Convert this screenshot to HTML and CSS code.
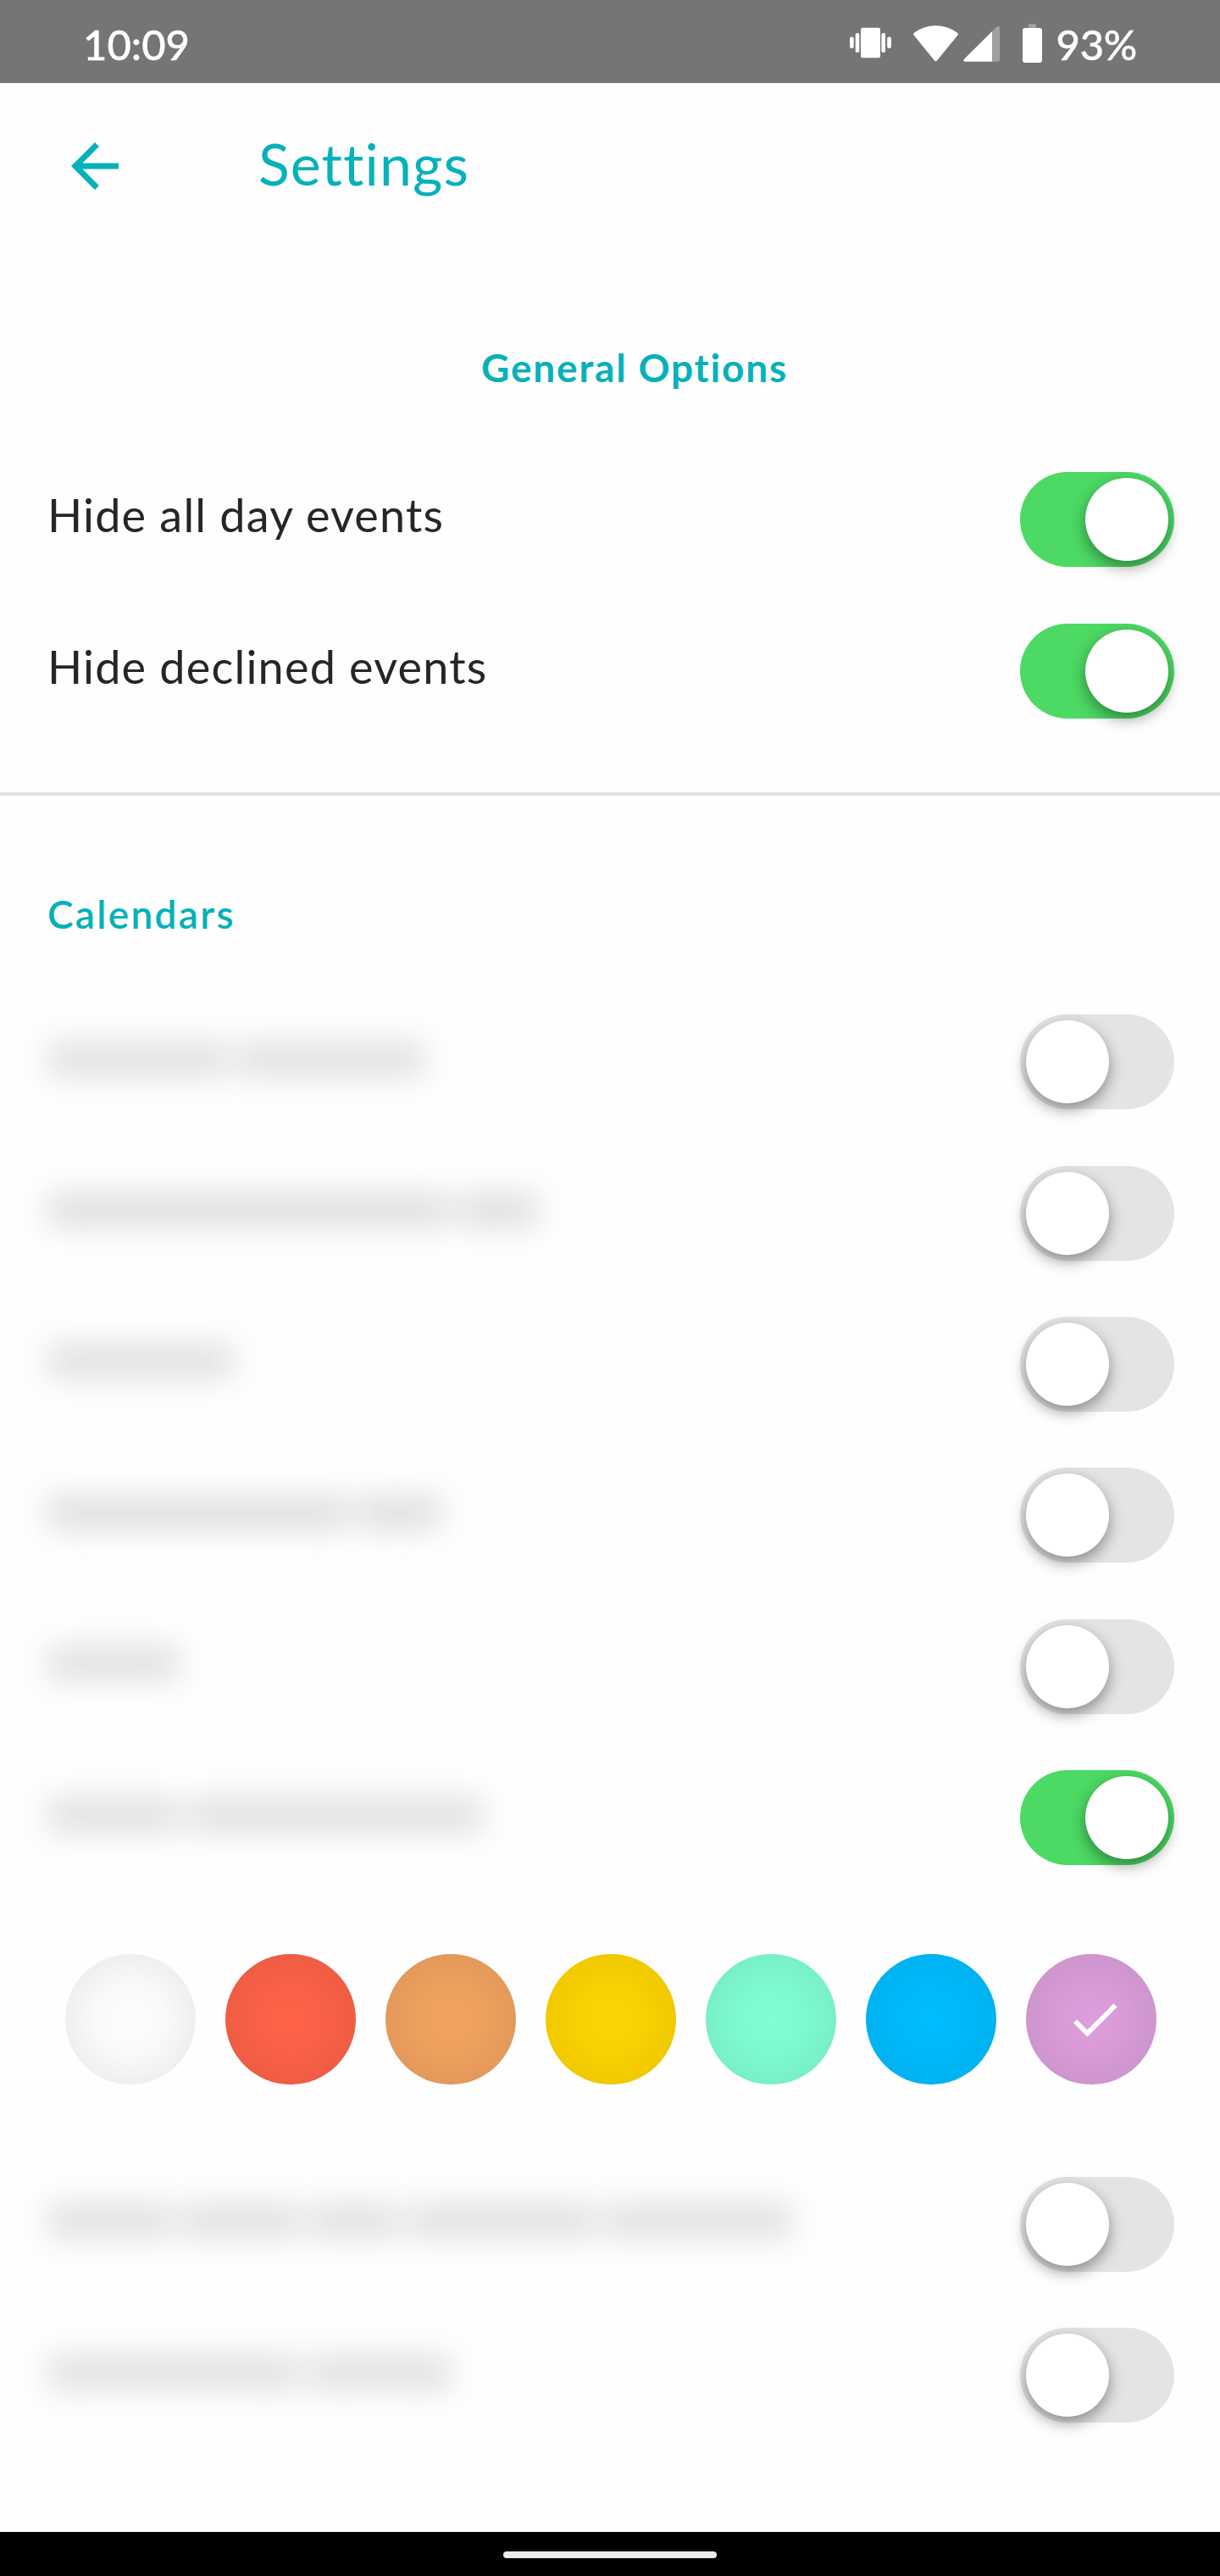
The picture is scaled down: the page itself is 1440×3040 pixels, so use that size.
FILE: index.html
```html
<!DOCTYPE html>
<html lang="en">
<head>
<meta charset="utf-8">
<title>Settings</title>
<link rel="stylesheet" href="styles.css">
</head>
<body>
<div class="screen">
  <div class="status-bar">
    <span class="clock">10:09</span>
    <div class="status-right">
      <svg class="status-icons" width="232" height="50" viewBox="1000 26 232 50" fill="#fff">
        <rect x="1003" y="43.5" width="4.7" height="13.5" rx="2"/>
        <rect x="1009.7" y="39" width="4.6" height="23" rx="2"/>
        <rect x="1016" y="32.7" width="23" height="35.6" rx="2"/>
        <rect x="1040.4" y="39" width="4.6" height="23" rx="2"/>
        <rect x="1047.2" y="43.5" width="4.7" height="13.5" rx="2"/>
        <path d="M1078.4 41.2 Q1077.6 39.8 1079 38.8 Q1090 30.3 1104.5 30.3 Q1119 30.3 1130 38.8 Q1131.5 39.8 1130.6 41.2 L1106 71.5 Q1104.5 73.2 1103 71.5 Z"/>
        <path d="M1171 37 L1176 32 Q1180 29.5 1180 33 V70 Q1180 72.8 1177 72.8 H1171 Z" fill="#a0a0a0"/>
        <path d="M1171 37 V72.8 H1139 Q1136 72 1138 69.8 Z"/>
        <rect x="1214" y="28.3" width="9" height="5" fill="#a0a0a0"/>
        <rect x="1207" y="33" width="23" height="41" rx="3"/>
      </svg>
      <span class="battery">93%</span>
    </div>
  </div>

  <header class="app-bar">
    <svg class="back" width="84" height="84" viewBox="0 0 24 24" fill="#06b1ba"><path d="M20 11H7.83l5.59-5.59L12 4l-8 8 8 8 1.41-1.41L7.83 13H20v-2z"/></svg>
    <h1 class="title">Settings</h1>
  </header>

  <main class="content">
    <section class="general">
      <h2 class="heading heading-general">General Options</h2>
      <div class="row"><span class="label">Hide all day events</span><span class="toggle on"><i class="knob"></i></span></div>
      <div class="row"><span class="label">Hide declined events</span><span class="toggle on"><i class="knob"></i></span></div>
    </section>

    <section class="calendars">
      <h2 class="heading heading-calendars">Calendars</h2>
      <div class="row"><span class="hidden-name"><i style="width:212px"></i><i style="width:218px"></i></span><span class="toggle"><i class="knob"></i></span></div>
      <div class="row"><span class="hidden-name low"><i style="width:472px"></i><i style="width:92px"></i></span><span class="toggle"><i class="knob"></i></span></div>
      <div class="row"><span class="hidden-name"><i style="width:217px"></i></span><span class="toggle"><i class="knob"></i></span></div>
      <div class="row"><span class="hidden-name low"><i style="width:353px"></i><i style="width:96px"></i></span><span class="toggle"><i class="knob"></i></span></div>
      <div class="row"><span class="hidden-name"><i style="width:154px"></i></span><span class="toggle"><i class="knob"></i></span></div>
      <div class="row"><span class="hidden-name"><i style="width:154px"></i><i style="width:345px"></i></span><span class="toggle on"><i class="knob"></i></span></div>
      <div class="swatches">
        <span class="swatch white"></span>
        <span class="swatch tomato"></span>
        <span class="swatch orange"></span>
        <span class="swatch gold"></span>
        <span class="swatch mint"></span>
        <span class="swatch blue"></span>
        <span class="swatch plum"><svg class="check" width="70.4" height="70.4" viewBox="0 0 24 24" fill="#fff"><path d="M9 16.17L4.83 12l-1.42 1.41L9 19 21 7l-1.41-1.41z"/></svg></span>
      </div>
      <div class="row"><span class="hidden-name"><i style="width:146px"></i><i style="width:138px"></i><i style="width:102px"></i><i style="width:219px"></i><i style="width:220px"></i></span><span class="toggle"><i class="knob"></i></span></div>
      <div class="row"><span class="hidden-name"><i style="width:294px"></i><i style="width:168px"></i></span><span class="toggle"><i class="knob"></i></span></div>
    </section>
  </main>

  <nav class="nav-bar"><span class="pill"></span></nav>
</div>
</body>
</html>
```
FILE: styles.css
```css
* { box-sizing: border-box; }
body { margin: 0; background: #fefefe; font-family: Lato, "Open Sans", sans-serif; font-variant-ligatures: none; }
h1, h2 { margin: 0; }
.screen { width: 1440px; height: 3040px; display: flex; flex-direction: column; overflow: hidden; }

.status-bar { height: 98px; background: #757575; color: #fff; display: flex; justify-content: space-between; padding: 0 98px 0 98px; font-size: 49px; line-height: 105px; font-weight: 500; -webkit-text-stroke: 0.4px #fff; }
.status-right { display: flex; gap: 15px; }
.status-icons { margin-top: 26px; -webkit-text-stroke: 0; }
.battery { letter-spacing: -0.3px; }

.app-bar { height: 196px; display: flex; align-items: center; padding-left: 70px; }
.title { margin: -6px 0 0 151px; font-size: 68px; font-weight: 400; letter-spacing: 1.1px; color: #06b1ba; line-height: 84px; }

.content { flex: 1; }
.heading { font-size: 46px; line-height: 60px; color: #06b1ba; }
.general { height: 645px; border-bottom: 4px solid #e0e0e0; padding-top: 110px; }
.heading-general { padding-left: 568px; margin-bottom: 60px; font-weight: 700; letter-spacing: 1.8px; }
.row { height: 178.4px; padding: 0 54px 0 56px; display: flex; justify-content: space-between; align-items: center; }
.label { font-size: 54px; line-height: 70px; letter-spacing: 1.2px; color: #262626; margin-top: -10px; }

.toggle { width: 182px; height: 112px; padding: 7px; border-radius: 56px; background: #e4e4e4; display: flex; }
.toggle.on { background: #4cd964; justify-content: flex-end; }
.knob { width: 98px; height: 98px; border-radius: 50%; background: #fff; box-shadow: 0 7px 18px rgba(0, 0, 0, .4); }

.calendars { padding-top: 110px; }
.heading-calendars { padding-left: 56px; margin-bottom: 55px; font-weight: 600; letter-spacing: 2.3px; }
.hidden-name { display: flex; gap: 13px; padding-left: 1px; margin-top: -7px; filter: blur(18px); }
.hidden-name i { height: 38px; background: #dedede; }
.hidden-name.low i { height: 36px; background: #dbdbdb; }

.swatches { height: 301.4px; padding: 0 75px 4px 77px; display: flex; gap: 35px; align-items: center; }
.swatch { flex: none; width: 154px; height: 154px; border-radius: 50%; display: flex; align-items: center; justify-content: center; }
.white { background: radial-gradient(circle closest-side, #fdfdfd, #fafafa 50%, #efefef); }
.tomato { background: radial-gradient(circle closest-side, #ff6347, #f96146 50%, #ee5d43); }
.orange { background: radial-gradient(circle closest-side, #f1a45f, #eda15e 50%, #e3995a); }
.gold { background: radial-gradient(circle closest-side, #fbd505, #f8d202 50%, #f0c900); }
.mint { background: radial-gradient(circle closest-side, #7fffd4, #7dfad0 50%, #78f0c7); }
.blue { background: radial-gradient(circle closest-side, #00bdff, #00b9fa 50%, #00b2f0); }
.plum { background: radial-gradient(circle closest-side, #dc9edc, #d89bd8 50%, #ce95ce); }
.check { margin-left: 8px; }

.nav-bar { height: 52px; background: #000; display: flex; justify-content: center; padding-top: 23px; }
.pill { width: 252px; height: 8px; border-radius: 4px; background: #ebebeb; }
```
